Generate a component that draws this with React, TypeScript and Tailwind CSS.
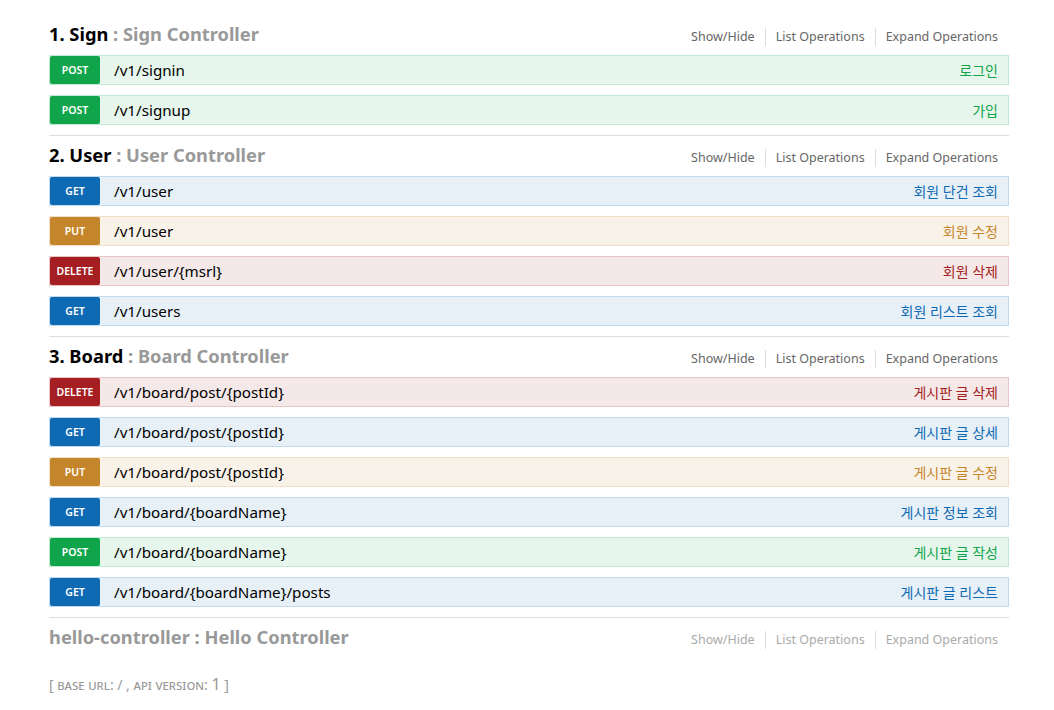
type Method = 'get' | 'post' | 'put' | 'delete'

interface Op {
  method: Method
  path: string
  summary: string
}

interface Section {
  name: string
  title: string
  ops: Op[]
}

const styles: Record<Method, { row: string; badge: string; text: string }> = {
  post:   { row: 'bg-[#e7f6ec] border-[#c3e8d1]', badge: 'bg-[#10a54a]', text: 'text-[#10a54a]' },
  get:    { row: 'bg-[#e7f0f7] border-[#c3d9ec]', badge: 'bg-[#0f6ab4]', text: 'text-[#0f6ab4]' },
  put:    { row: 'bg-[#f9f2e9] border-[#f0e0ca]', badge: 'bg-[#c5862b]', text: 'text-[#c5862b]' },
  delete: { row: 'bg-[#f5e8e8] border-[#e8c6c7]', badge: 'bg-[#a41e22]', text: 'text-[#a41e22]' },
}

const sections: Section[] = [
  {
    name: '1. Sign', title: 'Sign Controller',
    ops: [
      { method: 'post', path: '/v1/signin', summary: '로그인' },
      { method: 'post', path: '/v1/signup', summary: '가입' },
    ],
  },
  {
    name: '2. User', title: 'User Controller',
    ops: [
      { method: 'get',    path: '/v1/user',        summary: '회원 단건 조회' },
      { method: 'put',    path: '/v1/user',        summary: '회원 수정' },
      { method: 'delete', path: '/v1/user/{msrl}', summary: '회원 삭제' },
      { method: 'get',    path: '/v1/users',       summary: '회원 리스트 조회' },
    ],
  },
  {
    name: '3. Board', title: 'Board Controller',
    ops: [
      { method: 'delete', path: '/v1/board/post/{postId}',      summary: '게시판 글 삭제' },
      { method: 'get',    path: '/v1/board/post/{postId}',      summary: '게시판 글 상세' },
      { method: 'put',    path: '/v1/board/post/{postId}',      summary: '게시판 글 수정' },
      { method: 'get',    path: '/v1/board/{boardName}',        summary: '게시판 정보 조회' },
      { method: 'post',   path: '/v1/board/{boardName}',        summary: '게시판 글 작성' },
      { method: 'get',    path: '/v1/board/{boardName}/posts',  summary: '게시판 글 리스트' },
    ],
  },
]

const font = { fontFamily: '"Noto Sans", "Open Sans", "Noto Sans CJK KR", sans-serif' }

function Options({ muted }: { muted?: boolean }) {
  const color = muted ? 'text-[#aaa]' : 'text-[#666]'
  return (
    <ul className={`flex items-center text-[12.5px] ${color} pr-[11px] pt-[3px]`}>
      <li className="px-[10px] border-r border-[#ddd] leading-[18px]">Show/Hide</li>
      <li className="px-[10px] border-r border-[#ddd] leading-[18px]">List Operations</li>
      <li className="pl-[10px] leading-[18px]">Expand Operations</li>
    </ul>
  )
}

function OpRow({ op }: { op: Op }) {
  const s = styles[op.method]
  return (
    <div className={`flex items-center h-[30px] border mb-[10px] ${s.row}`}>
      <span className={`w-[50px] h-[28px] pt-[2px] flex items-center justify-center rounded-[2px] text-white text-[10.5px] font-semibold uppercase ${s.badge}`}>
        {op.method}
      </span>
      <span className="ml-[14px] text-[15.2px] text-black">{op.path}</span>
      <span className={`ml-auto pr-[10px] text-[14px] ${s.text}`}>{op.summary}</span>
    </div>
  )
}

export default function App() {
  return (
    <div className="min-h-screen bg-white" style={font}>
      <div className="ml-[49px] w-[960px] pt-[15px]">
        {sections.map(sec => (
          <div key={sec.name} className="border-b border-[#ddd]">
            <div className="flex items-center justify-between h-10">
              <h2 className="text-[18.3px] font-bold pb-[2px]">
                <span className="text-black">{sec.name}</span>
                <span className="text-[#999]"> : {sec.title}</span>
              </h2>
              <Options />
            </div>
            {sec.ops.map((op, i) => <OpRow key={i} op={op} />)}
          </div>
        ))}

        <div className="flex items-center justify-between h-10">
          <h2 className="text-[18.3px] font-bold text-[#999] pb-[2px]">hello-controller : Hello Controller</h2>
          <Options muted />
        </div>

        <div className="mt-[14px] text-[14px] text-[#999]">
          [ <span className="[font-variant:small-caps] lowercase">base url</span>: / , <span className="[font-variant:small-caps] lowercase">api version</span>: <span className="text-[16px]">1</span> ]
        </div>
      </div>
    </div>
  )
}
